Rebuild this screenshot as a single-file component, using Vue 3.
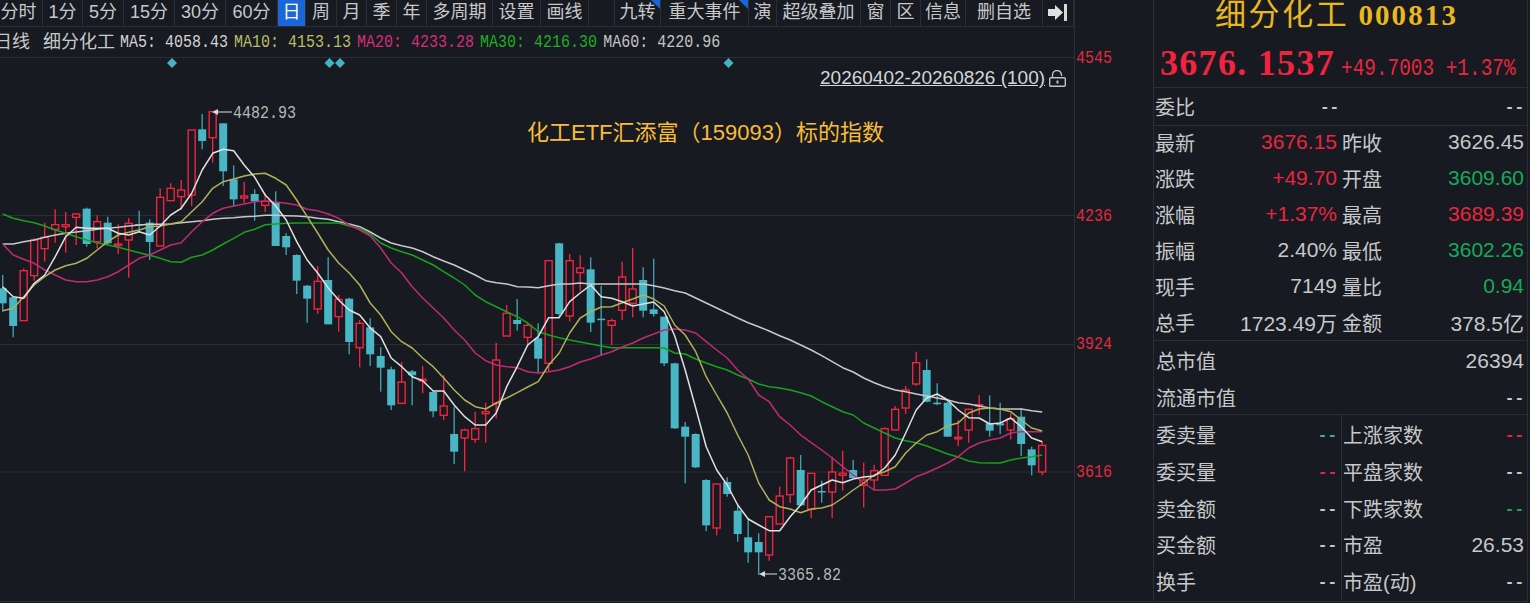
<template>
  <div class="terminal">
    <div class="chart-side">
      <div class="main">
        <div class="toolbar">
          <div
            v-for="btn in toolButtons"
            :key="btn.text"
            class="tool-btn"
            :class="{ active: btn.text === '日', first: btn.text === '分时', flagged: btn.flag }"
          >
            <span>{{ btn.text }}</span>
          </div>
          <div class="tool-btn">
            <svg width="20" height="17" viewBox="0 0 20 17">
              <polygon points="0,5 7,5 7,1 15,8.500 7,16 7,12 0,12" fill="#e0e0e0" />
              <rect x="16" y="0" width="3" height="17" fill="#d8d8d8" />
            </svg>
          </div>
        </div>

        <div class="legend">
          <span class="legend-cn first">日线</span>
          <span class="legend-cn name">细分化工</span>
          <span v-for="ma in maLegend" :key="ma.name" class="legend-ma" :style="{ color: ma.color }">{{ ma.name }}: {{ ma.value }}</span>
        </div>

        <div class="chart">
          <svg class="plot" width="1074" height="545" viewBox="0 58 1074 545">
            <line v-for="y in gridLines" :key="y" x1="0" x2="1074" :y1="y" :y2="y" class="grid" />

            <g v-for="x in diamonds" :key="x">
              <polygon :points="`${x},58 ${x + 5},63 ${x},68 ${x - 5},63`" fill="#46b3c2" />
            </g>

            <g v-for="c in candles" :key="c.i">
              <template v-if="c.up">
                <line :x1="c.x" :x2="c.x" :y1="c.top" :y2="c.bodyTop" class="wick-up" />
                <line :x1="c.x" :x2="c.x" :y1="c.bodyBottom" :y2="c.bottom" class="wick-up" />
                <rect :x="c.x - 3.5" :y="c.bodyTop" width="7" :height="c.bodyHeight" class="body-up" />
              </template>
              <template v-else>
                <line :x1="c.x" :x2="c.x" :y1="c.top" :y2="c.bottom" class="wick-down" />
                <rect :x="c.x - 4" :y="c.bodyTop" width="8" :height="c.bodyHeight" class="body-down" />
              </template>
            </g>

            <polyline v-for="line in maLines" :key="line.name" :points="line.points" :stroke="line.color" class="ma-line" />

            <g class="mark">
              <line x1="216" x2="232" y1="112" y2="112" />
              <polygon points="212,112 218,109 218,115" />
              <text x="233" y="118" textLength="63" lengthAdjust="spacingAndGlyphs">4482.93</text>
              <line x1="763" x2="777" y1="574" y2="574" />
              <polygon points="759,574 765,571 765,577" />
              <text x="778" y="580" textLength="63" lengthAdjust="spacingAndGlyphs">3365.82</text>
            </g>
          </svg>

          <div class="range">
            <span>20260402-20260826 (100)</span>
            <svg width="17" height="17" viewBox="0 0 17 17" fill="none" stroke="#c0c0c0" stroke-width="1.4">
              <rect x="0.700" y="7.700" width="15.600" height="8.600" rx="1" />
              <path d="M3.500 7.500V5a4.500 4.500 0 0 1 9 0v1" />
              <rect x="7.500" y="10.500" width="2" height="3" fill="#c0c0c0" stroke="none" />
            </svg>
          </div>
          <div class="caption">化工ETF汇添富（159093）标的指数</div>
        </div>
      </div>

      <div class="axis">
        <span v-for="t in axisTicks" :key="t.label" class="tick" :style="{ top: t.y + 'px' }">{{ t.label }}</span>
      </div>
    </div>

    <aside class="panel">
      <div class="head">
        <div class="title"><span class="title-cn">细分化工</span> <span class="title-code">000813</span></div>
        <div class="quote">
          <span class="price">3676. 1537</span>
          <span class="change">+49.7003 +1.37%</span>
        </div>
      </div>

      <div class="row-wide ratio">
        <span>委比</span>
        <span class="dash mid">--</span>
        <span class="dash">--</span>
      </div>

      <div class="quad">
        <div v-for="cell in quadCells" :key="cell.label" class="cell">
          <span>{{ cell.label }}</span>
          <span class="num" :class="cell.tone">{{ cell.value }}</span>
        </div>
      </div>

      <div class="caps">
        <div class="row-wide">
          <span>总市值</span>
          <span class="num">26394</span>
        </div>
        <div class="row-wide">
          <span>流通市值</span>
          <span class="dash">--</span>
        </div>
      </div>

      <div class="lower">
        <div class="lower-col left">
          <div v-for="cell in lowerLeft" :key="cell.label" class="lower-row">
            <span>{{ cell.label }}</span>
            <span :class="[cell.value === '--' ? 'dash' : 'num', cell.tone]">{{ cell.value }}</span>
          </div>
        </div>
        <div class="lower-col">
          <div v-for="cell in lowerRight" :key="cell.label" class="lower-row">
            <span>{{ cell.label }}</span>
            <span :class="[cell.value === '--' ? 'dash' : 'num', cell.tone]">{{ cell.value }}</span>
          </div>
        </div>
      </div>
    </aside>
  </div>
</template>

<script setup>
const toolButtons = [
  { text: '分时' }, { text: '1分' }, { text: '5分' }, { text: '15分' }, { text: '30分' }, { text: '60分' },
  { text: '日' }, { text: '周' }, { text: '月' }, { text: '季' }, { text: '年' }, { text: '多周期' },
  { text: '设置' }, { text: '画线' }, { text: '' }, { text: '九转', flag: true }, { text: '重大事件', flag: true },
  { text: '演' }, { text: '超级叠加' }, { text: '窗' }, { text: '区' }, { text: '信息' }, { text: '删自选' }
]

const maLegend = [
  { name: 'MA5', value: '4058.43', color: '#d4d4d4' },
  { name: 'MA10', value: '4153.13', color: '#bcbc62' },
  { name: 'MA20', value: '4233.28', color: '#d62c7c' },
  { name: 'MA30', value: '4216.30', color: '#1fae24' },
  { name: 'MA60', value: '4220.96', color: '#c4c4c4' }
]

const gridLines = [215.5, 344.5, 472]
const diamonds = [172, 329.5, 340, 728.5]

const axisTicks = [
  { label: '4545', y: 49 },
  { label: '4236', y: 207 },
  { label: '3924', y: 335 },
  { label: '3616', y: 463 }
]

const candleX = (i) => 2.67 + 10.5 * i

// [up, wick top, body top, body bottom, wick bottom], each block read at 3x with its own y origin
const candleBlocks = [
  [100, [
    [0, 525, 565, 610, 635], [0, 590, 592, 678, 712], [1, 505, 512, 662, 662], [1, 415, 420, 527, 542],
    [1, 368, 412, 446, 485], [1, 328, 374, 388, 428], [1, 336, 374, 380, 458], [1, 340, 342, 352, 435],
    [0, 323, 326, 432, 440], [1, 346, 365, 425, 445], [0, 350, 368, 430, 435], [1, 373, 432, 436, 462],
    [1, 354, 370, 420, 533], [0, 332, 372, 376, 395], [0, 358, 368, 426, 480], [1, 265, 292, 438, 438],
    [1, 250, 265, 302, 302], [1, 240, 270, 290, 330], [1, 90, 90, 285, 318], [0, 42, 88, 123, 148],
    [1, 35, 35, 113, 188], [0, 70, 70, 214, 258], [0, 196, 238, 298, 320], [1, 246, 288, 294, 310],
    [0, 268, 282, 304, 362], [1, 280, 304, 316, 336], [0, 274, 306, 438, 438]
  ]],
  [230, [
    [0, 10, 18, 52, 75], [0, 73, 75, 152, 192], [0, 165, 167, 206, 278], [1, 108, 154, 237, 252],
    [0, 82, 150, 283, 283], [1, 195, 208, 260, 305], [0, 203, 206, 336, 373], [1, 270, 280, 353, 412],
    [0, 265, 292, 373, 408], [0, 352, 378, 413, 485], [0, 410, 418, 526, 540], [1, 396, 456, 520, 520],
    [0, 420, 424, 436, 526], [1, 408, 448, 452, 490], [0, 484, 486, 544, 562], [1, 436, 528, 556, 570],
    [0, 530, 612, 665, 702], [1, 596, 600, 624, 724], [1, 545, 596, 628, 638], [1, 518, 545, 551, 638],
    [1, 338, 390, 520, 565], [1, 225, 250, 318, 318], [0, 207, 270, 282, 302], [1, 278, 286, 322, 350],
    [0, 280, 325, 386, 430], [1, 92, 92, 400, 425], [0, 38, 40, 252, 260], [1, 72, 92, 258, 275],
    [1, 76, 114, 128, 182], [0, 82, 118, 278, 306], [0, 168, 266, 269, 378], [1, 266, 272, 286, 345],
    [1, 95, 141, 241, 270], [1, 54, 177, 220, 262], [0, 112, 150, 242, 262], [0, 86, 238, 252, 260]
  ]],
  [320, [
    [0, -10, -10, 130, 138], [0, 128, 130, 325, 327], [0, 306, 320, 350, 490], [0, 340, 342, 442, 444],
    [0, 478, 480, 616, 634], [1, 492, 492, 624, 646], [0, 472, 486, 522, 530], [0, 556, 572, 642, 665],
    [0, 596, 652, 697, 728], [0, 640, 666, 697, 765], [1, 590, 590, 705, 722], [1, 500, 528, 612, 612],
    [1, 410, 414, 524, 548], [0, 405, 450, 556, 558], [1, 460, 460, 568, 594], [0, 482, 513, 516, 548],
    [1, 410, 456, 516, 594], [1, 392, 460, 466, 512], [0, 420, 450, 474, 474], [1, 428, 480, 496, 562],
    [1, 434, 452, 480, 512], [1, 322, 326, 466, 466], [1, 258, 268, 330, 330], [1, 198, 210, 264, 282],
    [1, 95, 128, 192, 198], [0, 118, 150, 245, 247], [0, 190, 248, 252, 256], [0, 240, 248, 350, 350],
    [1, 300, 352, 355, 378], [1, 266, 268, 330, 368], [1, 226, 254, 258, 284], [0, 226, 310, 332, 350],
    [0, 248, 310, 316, 342], [1, 280, 296, 330, 358], [0, 264, 290, 372, 408], [0, 380, 388, 436, 466],
    [1, 362, 376, 456, 466]
  ]]
]

const candles = candleBlocks
  .flatMap(([origin, rows]) => rows.map((r) => [r[0], ...r.slice(1).map((v) => origin + v / 3)]))
  .map(([up, top, bodyTop, bodyBottom, bottom], i) => ({
    i,
    up: up === 1,
    x: candleX(i),
    top,
    bodyTop,
    bodyBottom,
    bottom,
    bodyHeight: Math.max(bodyBottom - bodyTop, 1.5)
  }))

const maSeries = [
  {
    name: 'MA60', color: '#c8c8c8', ys: [
      244, 244, 241.7, 240, 237.3, 235, 233.3, 232, 230.7, 229.3,
      228.3, 227.3, 226, 225, 224.3, 224.3, 224, 222.7, 221.7, 220.7,
      219.3, 218.3, 217.7, 216.7, 216.3, 215.3, 215.3, 215.7, 216, 216.7,
      218.3, 219.3, 221.7, 224, 226.7, 232, 238, 243, 245.7, 248,
      251.7, 256.7, 261, 265, 270, 275, 280.7, 282.7, 284, 286.7,
      287, 287.7, 285.7, 284, 284, 283, 284, 284, 284, 284,
      284, 284, 285.7, 288, 290.7, 293, 298, 303, 308, 313,
      318, 322.7, 326.7, 331, 335.7, 340, 345, 350, 355.7, 361.7,
      367.7, 372, 378, 382.7, 386.7, 390, 391.7, 394, 396, 398,
      400, 402.7, 404, 406, 408, 409, 409, 409, 410.7, 412
    ]
  },
  {
    name: 'MA30', color: '#18a01e', ys: [
      214, 218.3, 220.7, 222.7, 226, 230, 233.3, 236.7, 240, 242.7,
      245, 247.3, 250, 252.7, 255.3, 258.3, 261.7, 262.3, 257.3, 255,
      250, 244, 238.3, 232.3, 229.3, 224.7, 224, 223.3, 223, 223,
      223, 223, 223, 226, 228.3, 234, 243, 248, 251.7, 255,
      260, 265, 271.7, 278, 285, 295, 301.7, 306.7, 311.7, 316.7,
      323, 331.7, 335, 337.7, 340, 342, 344, 346, 347.7, 347.7,
      347.7, 347.7, 347.7, 348, 353, 354, 359, 363, 366.7, 370,
      375, 379, 384, 386.7, 388, 390, 392.7, 396, 401.7, 406.7,
      411.7, 415, 423, 428, 433, 438, 440.7, 442.7, 446, 450,
      454, 457, 461, 462.7, 463, 463, 460, 458, 456.7, 455
    ]
  },
  {
    name: 'MA20', color: '#c02a74', ys: [
      244, 255, 259.3, 263.3, 270, 275, 280, 281.7, 281.7, 280,
      276.7, 271.7, 265, 258.3, 255, 250, 245, 242.7, 231.7, 221.7,
      213.3, 208.3, 206, 204, 201.7, 201, 202, 203.3, 205, 209.3,
      210.7, 214, 218.3, 225, 230, 236, 248, 263, 273, 286.7,
      298, 308, 318, 330, 340, 353, 360.7, 365, 366.7, 367.7,
      371.7, 373, 371.7, 370, 366.7, 362, 359, 355, 351.7, 347,
      343, 338, 334, 330, 329, 330, 333, 341.7, 350, 358,
      370, 379, 395, 401.7, 416.7, 425, 435, 442.7, 450, 458,
      466.7, 475, 483, 490, 490, 489, 483, 476.7, 472.7, 468,
      463, 456.7, 448, 443, 440, 438, 433, 431.7, 431.7, 431.7
    ]
  },
  {
    name: 'MA10', color: '#b0b05a', ys: [
      310.7, 308.3, 296.7, 285, 276.7, 270, 265.7, 263.3, 258.3, 250,
      241.7, 235, 232.3, 230, 226.7, 226, 224, 221.7, 211.7, 201.7,
      188.3, 181.7, 179, 176, 174, 173.3, 178.3, 185, 200, 216.7,
      233, 250, 263, 273, 285, 303, 315, 331.7, 341.7, 348,
      358, 366.7, 378, 390, 400, 406.7, 409, 403, 398, 392.7,
      387, 381.7, 365, 353, 333, 318, 311.7, 307, 306.7, 302.7,
      299, 295, 299, 306, 325, 335, 351.7, 376.7, 395, 413,
      435, 455, 483, 500, 506.7, 509, 512.7, 509, 508, 505,
      498, 490, 483, 475, 471.7, 466.7, 453, 443, 435, 431.7,
      425.7, 423, 413, 409, 408, 409, 411.7, 420, 428, 431
    ]
  },
  {
    name: 'MA5', color: '#e0e0e0', ys: [
      286.7, 296.7, 298.3, 283.3, 275, 256.7, 236.7, 227.3, 228.3, 228.3,
      228.3, 233.3, 235, 231.7, 235, 226, 215, 208.3, 193.3, 170,
      153.3, 149.3, 150.7, 165, 177.3, 195, 206, 220, 241.7, 260,
      273, 288, 300, 310, 315, 328, 336.7, 358, 366.7, 376.7,
      380.7, 391, 391, 405, 416.7, 425, 425, 413, 386.7, 366.7,
      345, 336.7, 317.7, 317.7, 301.7, 293, 285, 296.7, 298.3, 301.7,
      306, 304, 302, 311.7, 336, 370, 408, 446.7, 470, 485,
      505, 519, 525, 530.7, 530.7, 516.7, 505, 490, 485, 480,
      482.7, 479, 477, 476, 468, 455, 433, 410, 398, 394,
      400, 410, 417.7, 418, 424, 423, 418, 426.7, 438, 441.7
    ]
  }
]

const maLines = maSeries.map((s) => ({
  name: s.name,
  color: s.color,
  points: s.ys.map((y, i) => `${candleX(i).toFixed(1)},${y}`).join(' ')
}))

const quadCells = [
  { label: '最新', value: '3676.15', tone: 'red' },
  { label: '昨收', value: '3626.45' },
  { label: '涨跌', value: '+49.70', tone: 'red' },
  { label: '开盘', value: '3609.60', tone: 'green' },
  { label: '涨幅', value: '+1.37%', tone: 'red' },
  { label: '最高', value: '3689.39', tone: 'red' },
  { label: '振幅', value: '2.40%' },
  { label: '最低', value: '3602.26', tone: 'green' },
  { label: '现手', value: '7149' },
  { label: '量比', value: '0.94', tone: 'green' },
  { label: '总手', value: '1723.49万' },
  { label: '金额', value: '378.5亿' }
]

const lowerLeft = [
  { label: '委卖量', value: '--', tone: 'teal' },
  { label: '委买量', value: '--', tone: 'red' },
  { label: '卖金额', value: '--' },
  { label: '买金额', value: '--' },
  { label: '换手', value: '--' }
]

const lowerRight = [
  { label: '上涨家数', value: '--', tone: 'red' },
  { label: '平盘家数', value: '--' },
  { label: '下跌家数', value: '--', tone: 'green' },
  { label: '市盈', value: '26.53' },
  { label: '市盈(动)', value: '--' }
]
</script>

<style scoped>
.terminal {
  display: flex;
  width: 1530px;
  height: 603px;
  overflow: hidden;
  background: #171a21;
  color: #c6c8ca;
  font-family: "Liberation Sans", "Noto Sans CJK SC", sans-serif;
}

.chart-side {
  display: flex;
  width: 1153px;
  flex: none;
  height: 602px;
  border-bottom: 1px solid #2b2e33;
  box-sizing: border-box;
}

.main {
  width: 1074px;
  flex: none;
  display: flex;
  flex-direction: column;
}

.toolbar {
  display: grid;
  grid-template-columns: 43px 40px 41px 51px 51px 52px 28px 31px 30px 30px 30px 66px 48px 48px 26px 46px 88px 28px 84px 30px 30px 45px 77px 31px;
  height: 27px;
  border-bottom: 1px solid #2b2e33;
  box-sizing: border-box;
}

.tool-btn {
  position: relative;
  display: flex;
  align-items: center;
  justify-content: center;
  border-right: 1px solid #2b2e33;
  font-size: 18px;
  line-height: 24px;
  white-space: nowrap;
  padding-bottom: 2px;
  overflow: hidden;
}

.tool-btn.first {
  padding-right: 5px;
}

.tool-btn.active {
  background: #1a66d6;
  color: #fff;
}

.tool-btn.flagged::after {
  content: "";
  position: absolute;
  top: 0;
  right: 0;
  border-top: 9px solid #1a66d6;
  border-left: 9px solid transparent;
}

.legend {
  display: flex;
  align-items: center;
  height: 31px;
  box-sizing: border-box;
  border-bottom: 1px solid #2b2e33;
  white-space: nowrap;
}

.legend-cn {
  font-size: 18px;
  line-height: 28px;
}

.legend-cn.first {
  margin-left: -6px;
}

.legend-cn.name {
  margin-left: 13px;
  margin-right: 5px;
}

.legend-ma {
  display: inline-block;
  font-family: "Liberation Mono", monospace;
  font-size: 15px;
  margin-right: 6px;
  transform: scaleY(1.18);
  white-space: pre;
}

.chart {
  position: relative;
  flex: 1;
}

.plot {
  position: absolute;
  top: 0;
  left: 0;
  display: block;
}

.grid {
  stroke: #2b2d31;
  stroke-width: 1;
}

.wick-up {
  stroke: #ee2440;
  stroke-width: 1.4;
}

.body-up {
  fill: #171a21;
  stroke: #ee2440;
  stroke-width: 1.4;
}

.wick-down {
  stroke: #3f9fae;
  stroke-width: 1.4;
}

.body-down {
  fill: #48b6c4;
}

.ma-line {
  fill: none;
  stroke-width: 1.5;
  stroke-linejoin: round;
}

.mark line {
  stroke: #c0c0c0;
  stroke-width: 1.2;
}

.mark polygon {
  fill: #d8d8d8;
}

.mark text {
  fill: #b8b8b8;
  font-family: "Liberation Mono", monospace;
  font-size: 17.500px;
}

.range {
  position: absolute;
  top: 9px;
  left: 820px;
  display: flex;
  align-items: center;
  gap: 4px;
  font-size: 19px;
  line-height: 22px;
  color: #d4d6d8;
}

.range span {
  text-decoration: underline;
}

.caption {
  position: absolute;
  top: 60px;
  left: 527px;
  font-size: 22px;
  line-height: 30px;
  color: #f8bc3a;
  white-space: nowrap;
}

.axis {
  position: relative;
  flex: 1;
  border-left: 1px solid #2b2e33;
}

.tick {
  position: absolute;
  left: 1px;
  font-family: "Liberation Mono", monospace;
  font-size: 15px;
  line-height: 20px;
  color: #e02a42;
  transform: scaleY(1.18);
}

.panel {
  width: 375px;
  flex: none;
  height: 602px;
  box-sizing: border-box;
  border-left: 1px solid #2b2e33;
  border-right: 1px solid #2b2e33;
  border-bottom: 1px solid #2b2e33;
  font-size: 20px;
}

.head {
  height: 87px;
  overflow: hidden;
}

.title {
  display: flex;
  align-items: baseline;
  height: 30px;
  padding-left: 61px;
  color: #e9b71f;
  line-height: 30px;
}

.title-cn {
  font-size: 31px;
  letter-spacing: 2.600px;
  margin-right: 9px;
}

.title-code {
  font-family: "Liberation Serif", serif;
  font-weight: 700;
  font-size: 29px;
  letter-spacing: 2.100px;
}

.quote {
  display: flex;
  align-items: baseline;
  margin-top: 13px;
  padding-left: 6px;
  gap: 6px;
  color: #e8263e;
  white-space: nowrap;
}

.price {
  font-family: "Liberation Serif", serif;
  font-weight: 700;
  font-size: 36px;
  line-height: 40px;
  letter-spacing: 1.300px;
  color: #f0243e;
}

.change {
  display: inline-block;
  font-family: "Liberation Mono", monospace;
  font-size: 19.400px;
  transform: scaleY(1.2);
  transform-origin: 0 80%;
}

.row-wide {
  display: flex;
  justify-content: space-between;
  align-items: center;
  height: 37px;
  padding: 0 3px 0 2px;
}

.ratio {
  position: relative;
  border-top: 1px solid #2b2e33;
  height: 38px;
  box-sizing: border-box;
  padding-left: 1px;
}

.dash {
  font-family: "Liberation Mono", monospace;
  font-size: 16px;
  font-weight: 700;
  padding-top: 3px;
}

.dash.mid {
  position: absolute;
  left: 166px;
}

.quad {
  display: grid;
  grid-template-columns: 187px 186px;
  grid-auto-rows: 36px;
  border-top: 1px solid #2b2e33;
  margin-bottom: -2px;
}

.cell {
  display: flex;
  justify-content: space-between;
  align-items: center;
  padding: 0 4px 4px 1px;
  white-space: nowrap;
}

.cell:nth-child(even) {
  padding: 0 3px 4px 1px;
}

.num {
  font-size: 21px;
}

.caps {
  position: relative;
  border-top: 1px solid #2b2e33;
  height: 74px;
  padding-top: 1px;
  box-sizing: border-box;
}

.lower {
  display: flex;
  border-top: 1px solid #2b2e33;
  height: 185px;
}

.lower-col {
  flex: 1;
  padding: 1.500px 3px 0 1px;
}

.lower-col.left {
  flex: none;
  width: 188px;
  box-sizing: border-box;
  padding: 1.500px 4px 0 2px;
  border-right: 1px solid #2b2e33;
}

.lower-row {
  display: flex;
  justify-content: space-between;
  align-items: center;
  height: 36.700px;
  white-space: nowrap;
}

.red { color: #e8263e; }
.green { color: #17a85a; }
.teal { color: #3fa9b5; }
</style>

<style>
html, body {
  background: #171a21;
  overflow: hidden;
}
</style>
